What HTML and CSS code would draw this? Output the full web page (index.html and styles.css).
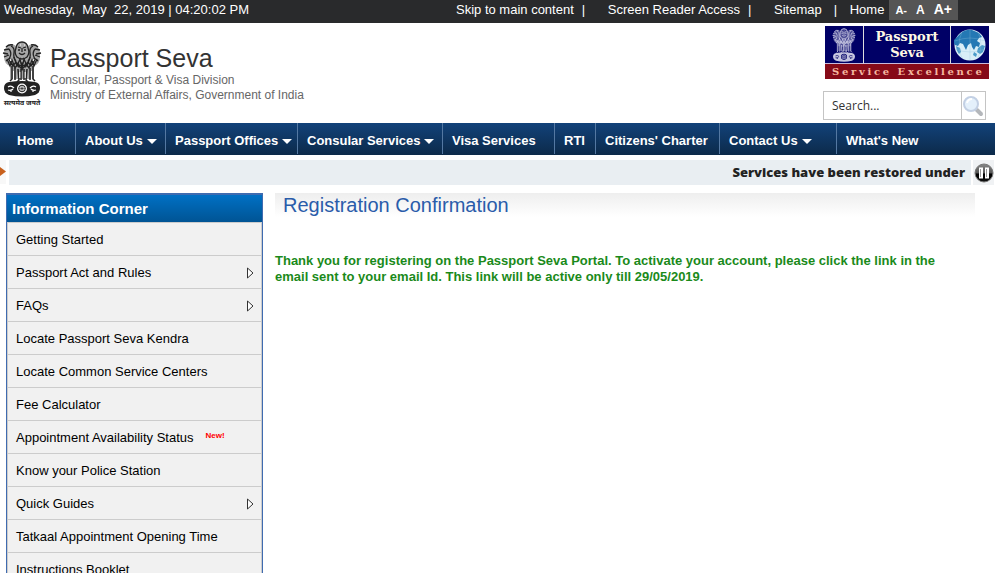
FILE: index.html
```html
<!DOCTYPE html>
<html lang="en">
<head>
<meta charset="utf-8">
<meta name="viewport" content="width=device-width, initial-scale=1">
<title>Passport Seva</title>
<link rel="stylesheet" href="styles.css">
</head>
<body>
<svg class="defs" aria-hidden="true">
  <defs>
    <symbol id="emblem" viewBox="0 0 42 56">
      <path fill="currentColor" opacity=".4" d="M7 4q5-2 8 1q2-4 6-4t6 4q3-3 8-1q5 5 4 11q0 8-6 10v13H9V25q-6-2-6-10Q2 9 7 4z"/>
      <g fill="none" stroke="currentColor" stroke-width="1.300">
        <path d="M12 4q-4-1-7 2M3 9l5-1M2 12l5 1M3 16l5-2M5 20l4-3M30 4q4-1 7 2M39 9l-5-1M40 12l-5 1M39 16l-5-2M37 20l-4-3"/>
        <path d="M15 7q1-6 6-6t6 6q2 5-1 9q-5 4-10 0q-3-4-1-9z"/>
        <path d="M17 6l3 1M25 6l-3 1M21 7v4M18 12q3 3 6 0M17 9h2M23 9h2"/>
        <path d="M10 5q4 2 3 7t2 8M32 5q-4 2-3 7t-2 8M8 8q3 4 1 8t3 8M34 8q-3 4-1 8t-3 8"/>
        <path d="M13 16l3 9 3-7 2 9 2-9 3 7 3-9M6 18l3 7 2-6 3 8 3-5 4 7 4-7 3 5 3-8 2 6 3-7M9 21l3 4 3-4 3 5 3-4 3 4 3-5 3 4 3-4"/>
        <path d="M11 25v13l-2 2M14 27v12M17 28l1 11-2 2M20 28v11M23 28v11M26 28l-1 11 2 2M29 27v12M32 25v13l2 2" stroke-width="1.500"/>
      </g>
      <path fill="currentColor" d="M8 41q13-2 26 0q5 1 5 6q0 5-5 7q-13 3-26 0q-5-2-5-7q0-5 5-6z"/>
      <path d="M12.500 30v8M18.800 31v6M24.200 31v6M30.500 30v8M9 18l1 2M33 18l-1 2M19 4h1M23 4h1" stroke="var(--emblem-gap)"/>
      <circle cx="21" cy="47.500" r="5" fill="var(--emblem-gap)"/>
      <circle cx="21" cy="47.500" r="3.300" fill="none" stroke="currentColor"/>
      <path d="M21 44v7M17.500 47.500h7M18.500 45l5 5M23.500 45l-5 5" stroke="currentColor" stroke-width=".6"/>
      <path d="M7 46q3-2 6 1M7 49q3 1 5-1M35 46q-3-2-6 1M35 49q-3 1-5-1M10 51v-2M32 51v-2" fill="none" stroke="var(--emblem-gap)" stroke-width="1.200"/>
    </symbol>
  </defs>
</svg>

<div class="topbar">
  <span class="date">Wednesday,&nbsp; May&nbsp; 22, 2019 | 04:20:02 PM</span>
  <nav class="toplinks" aria-label="Accessibility">
    <a href="#main">Skip to main content</a><span class="bar">|</span>
    <a href="#reader">Screen Reader Access</a><span class="bar">|</span>
    <a href="#sitemap">Sitemap</a><span class="bar bar-wide">|</span>
    <a href="#home">Home</a>
  </nav>
  <div class="sizes">
    <button class="size-s" type="button">A-</button>
    <button class="size-m" type="button">A</button>
    <button class="size-l" type="button">A+</button>
  </div>
</div>

<header class="header">
  <div class="brand">
    <svg class="brand-emblem" viewBox="0 0 42 66" role="img" aria-label="State Emblem of India">
      <use href="#emblem" width="42" height="56"/>
      <text x="21" y="64" text-anchor="middle" class="motto">सत्यमेव जयते</text>
    </svg>
    <div class="brand-text">
      <h1>Passport Seva</h1>
      <p>Consular, Passport &amp; Visa Division</p>
      <p>Ministry of External Affairs, Government of India</p>
    </div>
  </div>
  <div class="header-side">
    <div class="banner">
      <div class="banner-cell">
        <svg class="banner-emblem" viewBox="0 0 42 56" aria-hidden="true"><use href="#emblem" width="42" height="56"/></svg>
      </div>
      <div class="banner-cell banner-title"><span>Passport</span><span>Seva</span></div>
      <div class="banner-cell">
        <svg class="globe" viewBox="0 0 32 32" aria-hidden="true">
          <circle cx="16" cy="16" r="15.500" fill="#d9eef7"/>
          <path fill="#2478b4" d="M6 5q5-5 12-4l7 3 3 4-3 1-2 3 3 2-1 4-3-1-2 4-2-3-1-4-3 2-2 5-3-6-3-1-2 3-3-1-2-4z"/>
          <path fill="#4b9bc8" d="M24 19l4-3 3 1-2 6-3 2-3-2zM20 23l3 2-1 3-3-2zM2 17l4 2 1 4-2 2q-3-4-3-8z"/>
          <path d="M1 12q15-6 30 0M1 20q15 6 30 0M16 1v30M8 3q-6 13 0 26M24 3q6 13 0 26" fill="none" stroke="#8fc3de" stroke-width=".3"/>
        </svg>
      </div>
      <div class="banner-foot"><span>S</span><span>e</span><span>r</span><span>v</span><span>i</span><span>c</span><span>e</span><span></span><span>E</span><span>x</span><span>c</span><span>e</span><span>l</span><span>l</span><span>e</span><span>n</span><span>c</span><span>e</span></div>
    </div>
    <form class="search">
      <input type="text" aria-label="Search" value="Search...">
      <button type="button" aria-label="Search">
        <svg viewBox="0 0 22 24" width="22" height="24" aria-hidden="true">
          <path d="M15 16l4 4" stroke="#b4b7bb" stroke-width="4" stroke-linecap="round"/>
          <circle cx="9" cy="10" r="7" fill="#e4f0fb" stroke="#c3d0e4" stroke-width="2"/>
          <path d="M5 9q1-4 5-4" fill="none" stroke="#fff" stroke-width="2"/>
        </svg>
      </button>
    </form>
  </div>
</header>

<nav class="menu" aria-label="Main">
  <a class="first" href="#home">Home</a>
  <a class="drop" href="#about">About Us</a>
  <a class="drop" href="#offices">Passport Offices</a>
  <a class="drop" href="#consular">Consular Services</a>
  <a href="#visa">Visa Services</a>
  <a href="#rti">RTI</a>
  <a href="#charter">Citizens' Charter</a>
  <a class="drop" href="#contact">Contact Us</a>
  <a href="#new">What's New</a>
</nav>

<div class="ticker">
  <svg class="ticker-arrow" viewBox="0 0 6 24" aria-hidden="true"><path d="M0 7l6 4.500L0 16z" fill="#c8601c"/></svg>
  <div class="ticker-text">Services have been restored under</div>
  <button class="pause" type="button" aria-label="Pause">
    <svg viewBox="0 0 20 20" width="20" height="20" aria-hidden="true">
      <defs><linearGradient id="pg" x2="0" y2="1"><stop offset="0" stop-color="#888"/><stop offset=".5" stop-color="#555"/><stop offset=".55" stop-color="#000"/><stop offset="1" stop-color="#111"/></linearGradient></defs>
      <circle cx="10" cy="10" r="9" fill="url(#pg)" stroke="#777"/>
      <path d="M5 4.500h4v11H5zM11 4.500h4v11h-4z" fill="#fff"/>
      <path d="M6.500 6v8M12.500 6v8" stroke="#999"/>
    </svg>
  </button>
</div>

<div class="content">
  <aside class="side">
    <h2>Information Corner</h2>
    <ul>
      <li><a href="#start">Getting Started</a></li>
      <li class="more"><a href="#act">Passport Act and Rules</a><svg class="tri" viewBox="0 0 8 12" aria-hidden="true"><path d="M1.500 1v10L7 6z"/></svg></li>
      <li class="more"><a href="#faq">FAQs</a><svg class="tri" viewBox="0 0 8 12" aria-hidden="true"><path d="M1.500 1v10L7 6z"/></svg></li>
      <li><a href="#kendra">Locate Passport Seva Kendra</a></li>
      <li><a href="#csc">Locate Common Service Centers</a></li>
      <li><a href="#fee">Fee Calculator</a></li>
      <li><a href="#status">Appointment Availability Status</a><span class="new">New!</span></li>
      <li><a href="#police">Know your Police Station</a></li>
      <li class="more"><a href="#guides">Quick Guides</a><svg class="tri" viewBox="0 0 8 12" aria-hidden="true"><path d="M1.500 1v10L7 6z"/></svg></li>
      <li><a href="#tatkaal">Tatkaal Appointment Opening Time</a></li>
      <li><a href="#booklet">Instructions Booklet</a></li>
    </ul>
  </aside>
  <main class="main" id="main">
    <h2>Registration Confirmation</h2>
    <p>Thank you for registering on the Passport Seva Portal. To activate your account, please click the link in the email sent to your email Id. This link will be active only till 29/05/2019.</p>
  </main>
</div>
</body>
</html>
```
FILE: styles.css
```css
* { box-sizing: border-box; }
html { overflow: hidden; }
body { margin: 0; height: 100vh; overflow: hidden; background: #fff; color: #000; font: 13px/16px "Liberation Sans", Arial, sans-serif; }
a { color: inherit; text-decoration: none; }
h1, h2, p, ul { margin: 0; padding: 0; }
button { margin: 0; padding: 0; border: 0; background: none; font: inherit; color: inherit; }
svg { display: block; }
.defs { position: absolute; width: 0; height: 0; }

.topbar { display: flex; height: 23px; padding: 0 37px 0 4px; background: #292a2c; color: #fff; line-height: 20px; }
.toplinks { display: flex; margin-left: auto; }
.bar { width: 4px; margin: 0 22px 0 8px; }
.toplinks .bar-wide { margin: 0 12px; }
.sizes { display: flex; align-items: baseline; gap: 9px; height: 20px; margin-left: 5px; padding: 0 6px; background: #555; font-weight: bold; line-height: 18px; }
.size-s { font-size: 11px; }
.size-m { font-size: 12px; }
.size-l { font-size: 14px; }

.header { display: flex; justify-content: space-between; height: 100px; padding: 2px 6px 0 0; }
.brand { display: flex; gap: 7px; padding: 16px 0 0 1px; }
.brand-emblem { width: 42px; height: 66px; color: #222; --emblem-gap: #fff; }
.motto { font: bold 7px "Noto Sans Devanagari", "Noto Sans", sans-serif; fill: #222; }
.brand-text { padding-top: 2px; color: #666; font-size: 12px; line-height: 15px; }
.brand-text h1 { color: #333; font-size: 25px; font-weight: normal; line-height: 30px; }
.banner { display: grid; grid-template-columns: 38px 1fr 38px; grid-template-rows: 38px 15px; width: 164px; margin-left: auto; margin-top: 1px; background: #000066; color: #fff; }
.banner-cell { display: flex; align-items: center; justify-content: center; border-bottom: 1px solid #c9b9d9; }
.banner-emblem { width: 26px; height: 34px; color: #c6c6e0; --emblem-gap: #000066; }
.banner-title { flex-direction: column; border-left: 1px solid #ddd; border-right: 1px solid #ddd; font: bold 13px/16px "DejaVu Serif", serif; color: #fff8e4; }
.globe { width: 32px; height: 32px; }
.banner-foot { grid-column: 1 / -1; display: flex; justify-content: space-between; padding: 0 7px; background: #860a18; color: #f5b8a0; font: bold 10px/15px "DejaVu Serif", serif; }
.banner-foot span { min-width: 3px; }
.search { display: flex; width: 163px; height: 29px; margin: 12px 3px 0 0; border: 1px solid #c4c4c4; }
.header-side { width: 166px; }
.search input { flex: 1; min-width: 0; padding: 0 8px; border: 0; outline: 0; background: #fff; color: #333; font: 12px "Open Sans", sans-serif; }
.search button { width: 24px; border-left: 1px solid #c4c4c4; }

.menu { display: grid; grid-template-columns: 75px 90px 132px 145px 112px 41px 124px 117px 1fr; height: 32px; padding-bottom: 1px; background: linear-gradient(#12427a, #0c2a4a); color: #fff; font-weight: bold; white-space: nowrap; }
.menu a { display: flex; align-items: center; padding: 4px 0 0 9px; border-left: 1px solid #5478a2; }
.menu .first { padding-left: 17px; border-left: 0; }
.drop::after { content: ""; margin: 2px 0 0 4px; border: 5px solid transparent; border-top-color: #fff; border-bottom: 0; }

.ticker { display: flex; margin-top: 5px; height: 25px; padding-right: 1px; }
.ticker-arrow { width: 6px; height: 24px; margin-right: 3px; background: #f8f8f8; }
.ticker-text { flex: 1; padding-right: 6px; background: #e9eef2; color: #222; font: 800 13px/25px "Open Sans", sans-serif; text-align: right; }
.pause { display: flex; align-items: center; justify-content: center; width: 21px; margin-left: 2px; background: #f0f2f4; }

.content { display: grid; grid-template-columns: 257px 1fr; gap: 12px; padding: 8px 20px 0 6px; }
.side { border: 1px solid #3f6bb0; border-top-width: 2px; }
.side h2 { height: 27px; padding-left: 5px; background: linear-gradient(#0070c4, #005494); color: #fff; font-size: 15px; line-height: 28px; }
.side ul { list-style: none; border: 1px solid #ccc; border-bottom: 0; }
.side li { display: flex; align-items: center; height: 33px; padding: 2px 7px 0 8px; border-bottom: 1px solid #ccc; background: #f1f1f1; }
.more { justify-content: space-between; }
.tri { width: 8px; height: 12px; fill: #fff; stroke: #333; }
.new { margin: 0 0 5px 12px; color: #f00; font-size: 8px; font-weight: bold; line-height: 8px; }
.main h2 { height: 24px; padding-left: 8px; background: linear-gradient(#eee, #fff); color: #2a5caa; font-size: 20px; font-weight: normal; line-height: 24px; }
.main p { margin-top: 36px; padding-right: 20px; color: #1a8a1a; font-weight: bold; }
```
